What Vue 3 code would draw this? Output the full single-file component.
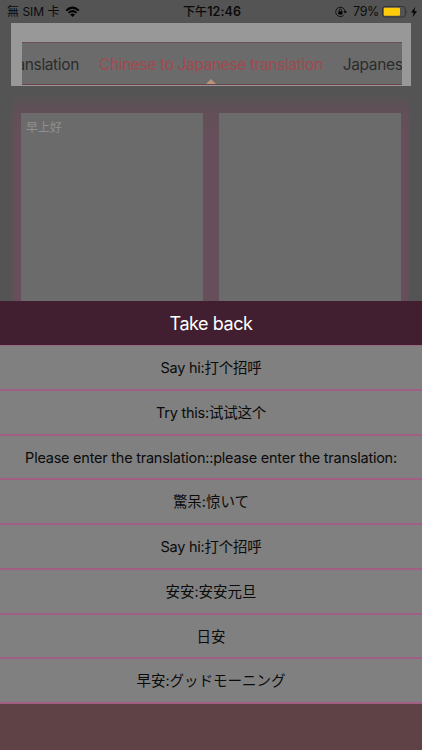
<script setup>
import { ref } from 'vue';

const tabs = ref([
  { id: 1, label: 'English to Chinese translation' },
  { id: 2, label: 'Chinese to Japanese translation' },
  { id: 3, label: 'Japanese to English translation' },
]);
const activeTab = ref(2);
const sourceText = ref('早上好');
const resultText = ref('');
const showHistory = ref(true);

const history = ref([
  { id: 1, text: 'Say hi:打个招呼' },
  { id: 2, text: 'Try this:试试这个' },
  { id: 3, text: 'Please enter the translation::please enter the translation:' },
  { id: 4, text: '驚呆:惊いて' },
  { id: 5, text: 'Say hi:打个招呼' },
  { id: 6, text: '安安:安安元旦' },
  { id: 7, text: '日安' },
  { id: 8, text: '早安:グッドモーニング' },
]);

// Latin text is set slightly tighter than Chinese and Japanese
const isLatin = (text) => /[a-z]/i.test(text);
</script>

<template>
  <div class="screen">
    <!-- Status bar -->
    <div class="status-bar">
      <div class="carrier">
        <span>無 SIM 卡</span>
        <svg class="wifi" viewBox="0 0 15 11">
          <path d="M0.5 3.9 Q7.5 -2.8 14.5 3.9 L13.1 5.3 Q7.5 0.1 1.9 5.3 Z" />
          <path d="M2.8 6.2 Q7.5 1.9 12.2 6.2 L10.8 7.6 Q7.5 4.7 4.2 7.6 Z" />
          <path d="M5.1 8.5 Q7.5 6.4 9.9 8.5 L7.5 10.9 Z" />
        </svg>
      </div>
      <div class="clock"><span class="period">下午</span>12:46</div>
      <div class="power">
        <svg class="lock" viewBox="0 0 12 12">
          <path d="M10.1 5.4 A4.7 4.7 0 1 0 8.6 9.4" fill="none" stroke="#0b0b0b" stroke-width="0.9" />
          <path d="M8.3 5.2 H12 L10.2 7.5 Z" />
          <rect x="3.3" y="5.2" width="4.2" height="3.2" rx="0.4" />
          <path d="M4.2 5.4 V4.3 A1.2 1.2 0 0 1 6.6 4.3 V5.4" fill="none" stroke="#0b0b0b" stroke-width="0.9" />
        </svg>
        <span class="percent">79%</span>
        <svg class="battery" viewBox="0 0 26 12">
          <rect x="0.5" y="0.5" width="22.8" height="10.5" rx="2.4" fill="none" stroke="#343434" />
          <rect x="1.8" y="1.8" width="16.2" height="7.9" rx="1" fill="#ffcc0b" />
          <path d="M24.3 4 Q25.9 5.8 24.3 7.6 Z" fill="#343434" />
        </svg>
        <svg class="bolt" viewBox="0 0 6 10">
          <path d="M4.4 0 L0 5.6 H2.7 L1.6 10 L6 4.2 H3.3 Z" />
        </svg>
      </div>
    </div>

    <!-- Translation direction tabs -->
    <div class="tab-frame">
      <div class="tabs">
        <span
          v-for="tab in tabs"
          :key="tab.id"
          class="tab"
          :class="{ active: tab.id === activeTab }"
          @click="activeTab = tab.id"
        >{{ tab.label }}</span>
      </div>
    </div>

    <!-- Source and result -->
    <div class="translator">
      <div class="panel">{{ sourceText }}</div>
      <div class="panel">{{ resultText }}</div>
    </div>

    <!-- History sheet -->
    <div v-if="showHistory" class="sheet">
      <div class="sheet-title" @click="showHistory = false">Take back</div>
      <div
        v-for="item in history"
        :key="item.id"
        class="sheet-row"
        :class="{ latin: isLatin(item.text) }"
      >{{ item.text }}</div>
    </div>
  </div>
</template>

<style>
body {
  background: #545454;
}
</style>

<style scoped>
.screen {
  position: relative;
  width: 422px;
  height: 750px;
  overflow: hidden;
  background: #545454;
  color: #0b0b0b;
  font-family: Inter, "Noto Sans CJK TC", sans-serif;
}

.status-bar {
  display: grid;
  grid-template-columns: 1fr auto 1fr;
  align-items: center;
  height: 23px;
  padding: 0 5px 0 7px;
  font-size: 12px;
  line-height: 22px;
}

.carrier,
.power {
  display: flex;
  align-items: center;
}

.carrier {
  gap: 5px;
}

.power {
  justify-content: flex-end;
}

.clock {
  font-size: 12.5px;
  font-weight: 600;
  letter-spacing: 0.1px;
}

.period {
  font-size: 12px;
  font-weight: 500;
}

.percent {
  font-size: 12.5px;
  letter-spacing: -0.35px;
}

.wifi {
  width: 15px;
  height: 11px;
}

.lock {
  width: 12px;
  height: 12px;
  margin-right: 6px;
}

.battery {
  width: 26px;
  height: 12px;
  margin-left: 3px;
}

.bolt {
  width: 6px;
  height: 10px;
  margin-left: 3px;
}

.tab-frame {
  box-sizing: border-box;
  width: 400px;
  height: 63px;
  margin-left: 11px;
  padding: 19px 9px 0 11px;
  background: #989898;
}

.tabs {
  box-sizing: border-box;
  display: flex;
  justify-content: center;
  gap: 20px;
  height: 43px;
  padding-left: 9px;
  border-top: 1px solid #6d4f54;
  border-bottom: 1px solid #6d4148;
  background: #6b6b6b;
  overflow: hidden;
}

.tab {
  flex: none;
  position: relative;
  font-size: 15.5px;
  line-height: 44px;
  letter-spacing: -0.36px;
  color: #2c2c2c;
  white-space: nowrap;
  cursor: pointer;
}

.tab.active {
  color: #a04a50;
}

.tab.active::after {
  content: '';
  position: absolute;
  left: 50%;
  top: 36px;
  margin-left: -5px;
  border: 5px solid transparent;
  border-top: none;
  border-bottom-color: #b8937a;
}

.translator {
  display: flex;
  gap: 16px;
  width: 380px;
  height: 190px;
  margin-left: 11px;
  padding: 27px 10px 0;
  background:
    linear-gradient(90deg, #545454, rgba(84, 84, 84, 0) 4px, rgba(84, 84, 84, 0) 396px, #545454),
    linear-gradient(#545454, #565455 10px, #624f58 25px, #664f5a 50px);
}

.panel {
  flex: 1;
  padding: 5px;
  background: #6b6b6b;
  color: #909090;
  font-size: 12px;
  line-height: 20px;
}

.sheet {
  position: absolute;
  left: 0;
  right: 0;
  top: 301px;
  bottom: 0;
  background: #5e4246;
}

.sheet-title {
  height: 44px;
  background: #411f30;
  border-bottom: 1.5px solid #9a6784;
  color: #fff;
  font-size: 18px;
  line-height: 45px;
  letter-spacing: -0.45px;
  text-align: center;
}

.sheet-row {
  box-sizing: border-box;
  height: 44.75px;
  border-bottom: 2px solid #a25f84;
  background: #808080;
  font-size: 14.5px;
  line-height: 44px;
  text-align: center;
  white-space: nowrap;
}

.sheet-row.latin {
  letter-spacing: -0.24px;
}
</style>
